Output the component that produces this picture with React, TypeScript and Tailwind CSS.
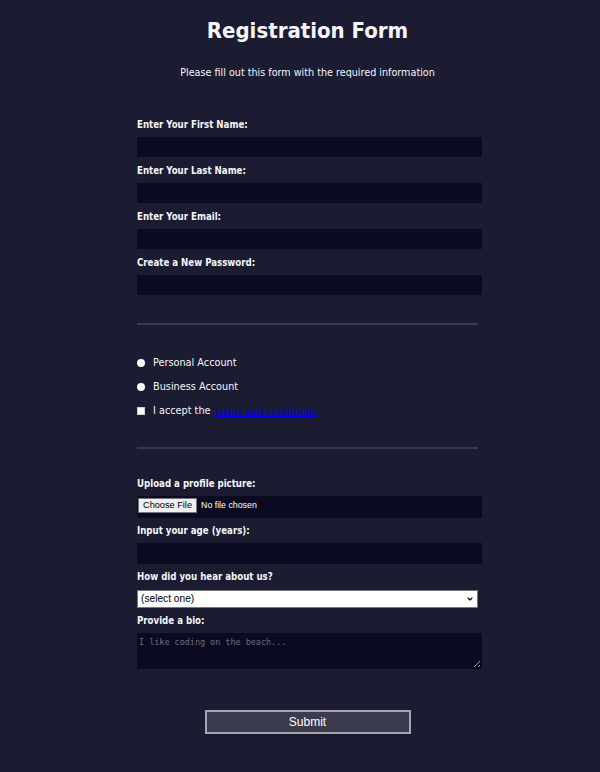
import { ChevronDown } from "lucide-react";

const font = "font-['DejaVu_Sans_Condensed','DejaVu_Sans',sans-serif]";

function TextField({ label, type = "text" }: { label: string; type?: string }) {
    return (
        <div className="pb-[6px]">
            <label className="block h-4 text-[9.6px] font-bold leading-4">{label}</label>
            <input
                type={type}
                className="mt-[4px] block h-5 w-[345px] border border-[#0a0a23] bg-[#0a0a23] text-white outline-none"
            />
        </div>
    );
}

export default function App() {
    return (
        <div className={`min-h-screen w-full bg-[#1b1b32] pl-[15px] text-[#f5f6f7] ${font}`}>
            <h1 className="pt-[17px] text-center text-[22px] font-bold leading-7">Registration Form</h1>
            <p className="mt-[20px] text-center text-[10.7px] leading-4">
                Please fill out this form with the required information
            </p>

            <form className="mx-auto mt-[36px] w-[341px] pb-8">
                {/* Personal details */}
                <div className="border-b-2 border-[#3b3b4f] pb-[22px]">
                    <TextField label="Enter Your First Name:" />
                    <TextField label="Enter Your Last Name:" />
                    <TextField label="Enter Your Email:" type="email" />
                    <TextField label="Create a New Password:" type="password" />
                </div>

                {/* Account type */}
                <div className="border-b-2 border-[#3b3b4f] pb-6 pt-[26px] text-[10.8px]">
                    <label className="flex h-6 items-center">
                        <input type="radio" name="account" className="mr-2 h-2 w-2 appearance-none rounded-full bg-white" />
                        Personal Account
                    </label>
                    <label className="flex h-6 items-center">
                        <input type="radio" name="account" className="mr-2 h-2 w-2 appearance-none rounded-full bg-white" />
                        Business Account
                    </label>
                    <label className="flex h-6 items-center">
                        <input type="checkbox" className="mr-2 h-2 w-2 appearance-none border border-[#cfcfcf] bg-white" />
                        I accept the
                        <a href="#" className="ml-[4px] font-['Liberation_Serif',serif] text-[12.2px] text-[#0000ee] underline">
                            terms and conditions
                        </a>
                    </label>
                </div>

                {/* Extra info */}
                <div className="pt-[27px]">
                    <label className="block h-4 text-[9.6px] font-bold leading-4">Upload a profile picture:</label>
                    <input
                        type="file"
                        className="mt-[4px] block h-[22px] w-[345px] bg-[#0a0a23] px-px py-[2px] font-['Liberation_Sans',sans-serif] text-[8.8px] text-white file:mr-[4px] file:h-[15px] file:border file:border-[#767676] file:bg-[#efefef] file:px-[4px] file:text-[9.2px] file:text-black"
                    />

                    <label className="mt-[5px] block h-4 text-[9.6px] font-bold leading-4">Input your age (years):</label>
                    <input type="number" className="mt-[4px] block h-[21px] w-[345px] border border-[#0a0a23] bg-[#0a0a23] text-white outline-none" />

                    <label className="mt-[5px] block h-4 text-[9.6px] font-bold leading-4">How did you hear about us?</label>
                    <div className="relative mt-[5px] w-[341px]">
                        <select className="block h-[18px] w-full appearance-none border border-[#767676] bg-white pl-[3px] font-['Liberation_Sans',sans-serif] text-[10.2px] text-black">
                            <option>(select one)</option>
                            <option>freeCodeCamp News</option>
                            <option>freeCodeCamp YouTube Channel</option>
                            <option>freeCodeCamp Forum</option>
                            <option>Other</option>
                        </select>
                        <ChevronDown className="pointer-events-none absolute right-[4px] top-[5px] h-[8px] w-[8px] text-black" strokeWidth={3.5} />
                    </div>

                    <label className="mt-[5px] block h-4 text-[9.6px] font-bold leading-4">Provide a bio:</label>
                    <textarea
                        rows={3}
                        placeholder="I like coding on the beach..."
                        className="mt-[4px] block h-9 w-[345px] resize border border-[#0a0a23] bg-[#0a0a23] px-px py-[2px] font-['DejaVu_Sans_Mono',monospace] text-[8.45px] text-white placeholder:text-[#6e6e7a]"
                    />
                </div>

                <input
                    type="submit"
                    value="Submit"
                    className="mx-auto mt-[41px] block h-6 w-[206px] border-2 border-[#a5a5b0] bg-[#3b3b4f] font-['Liberation_Sans',sans-serif] text-[12px] text-white"
                />
            </form>
        </div>
    );
}
